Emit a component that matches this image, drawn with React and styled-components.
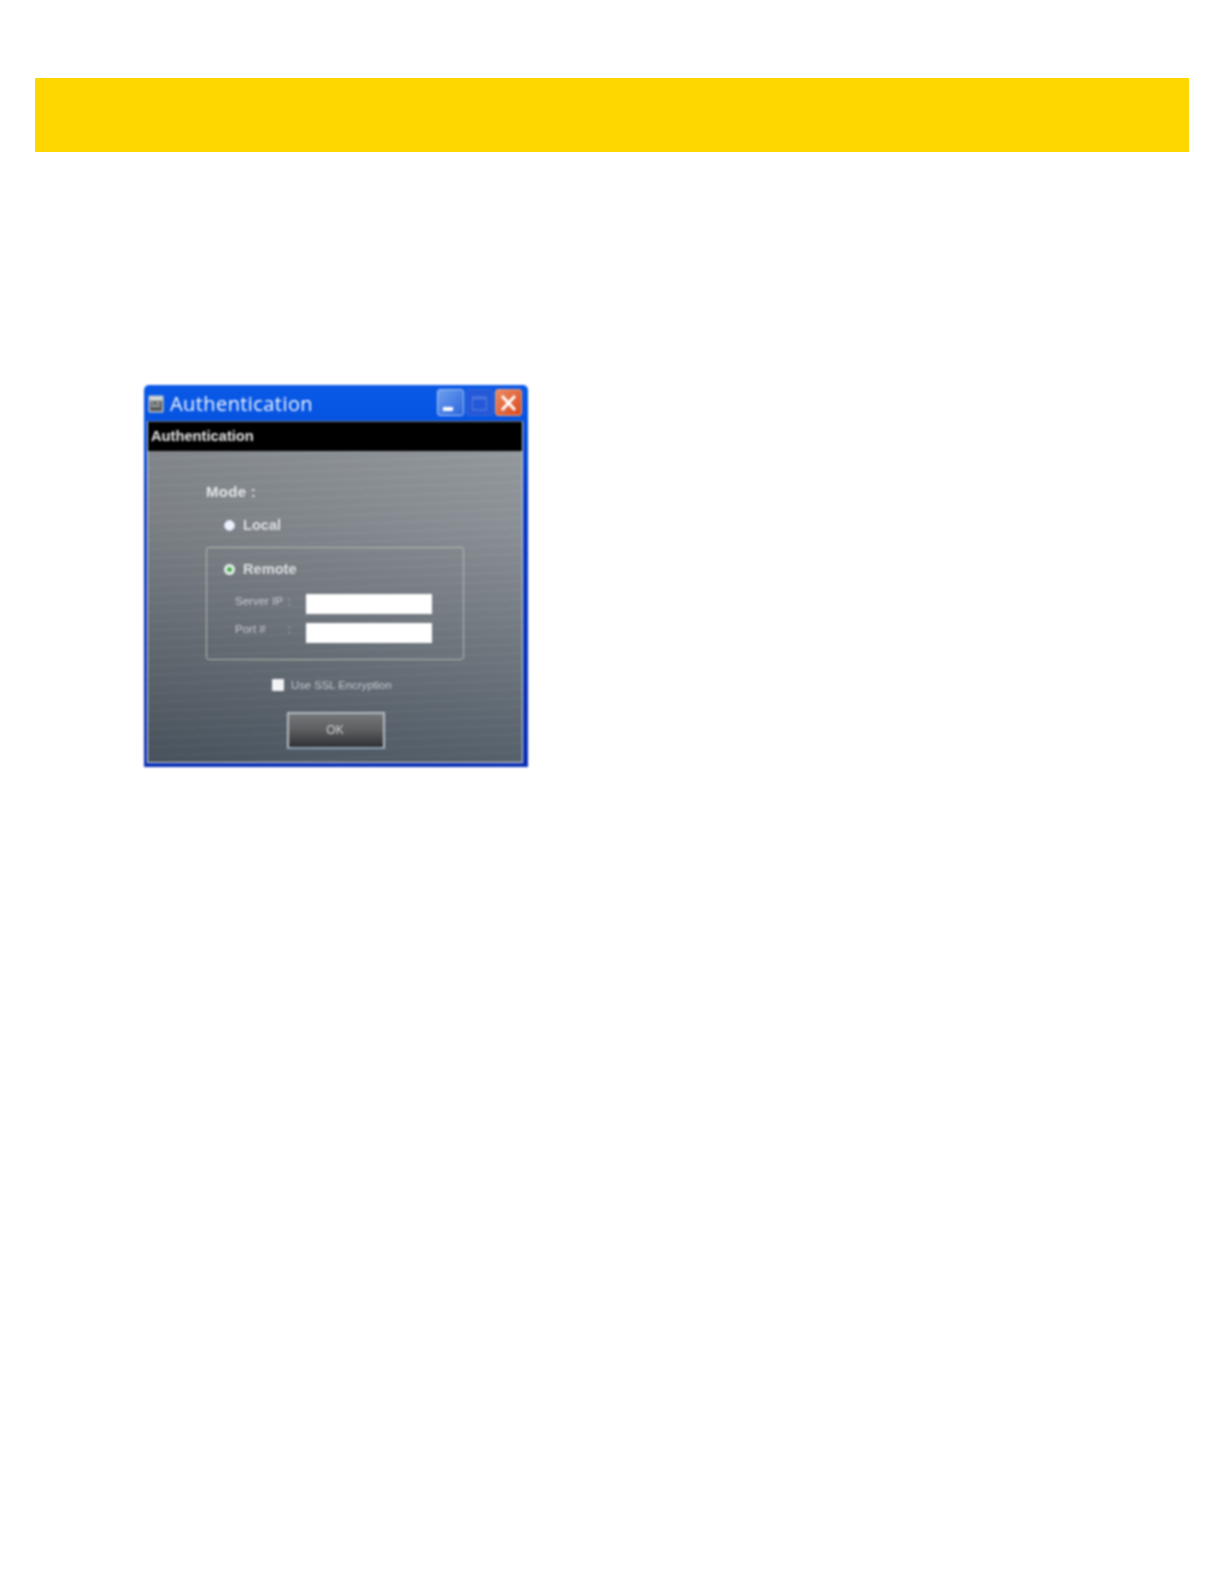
import React from 'react'
import { styled, createGlobalStyle } from 'styled-components'

const Global = createGlobalStyle`
   html, body {
      margin: 0;
      padding: 0;
      background: #fff;
      font-family: 'Liberation Sans', Arial, sans-serif;
   }
`

const Page = styled('div')`
   width: 1224px;
   height: 1584px;
   padding-top: 78px;
   box-sizing: border-box;
`
const Banner = styled('div')`
   width: 1154px;
   height: 74px;
   margin-left: 35px;
   background: #ffd700;
`
const Content = styled('div')`
   padding: 233px 0 0 144px;
`
const Window = styled('div')`
   width: 384px;
   height: 382px;
   box-sizing: border-box;
   display: flex;
   flex-direction: column;
   padding: 0 5px 4px 3px;
   background: linear-gradient(180deg, #0a5ae6 0%, #0653e2 10%, #0a3cc4 30%, #0c30b4 100%);
   border-radius: 5px 5px 0 0;
   filter: blur(0.9px);
`
const TitleBar = styled('div')`
   height: 36px;
   flex: none;
   display: flex;
   align-items: center;
   padding: 2px 0 0 1px;
   box-sizing: border-box;
`
const TitleIcon = styled('svg')`
   width: 16px;
   height: 18px;
   flex: none;
`
const TitleText = styled('span')`
   margin-left: 6px;
   color: #f4f8fe;
   font-family: 'Open Sans', sans-serif;
   font-size: 20px;
   font-weight: 500;
   line-height: 1;
   letter-spacing: 0.42px;
   flex: 1;
`
const WinButtons = styled('div')`
   display: flex;
   gap: 2px;
   margin: -3px 1px 0 0;
`
const WinButton = styled('div')`
   width: 27px;
   height: 27px;
   box-sizing: border-box;
   border-radius: 3px;
   border: 1px solid ${p => (p.$close ? '#e8a38c' : p.$dim ? '#3a68d8' : '#a9c6f2')};
   background: ${p =>
      p.$close
         ? 'linear-gradient(135deg, #ec8a63, #d8481c)'
         : p.$dim
            ? '#2458d8'
            : 'linear-gradient(135deg, #6f9ff0, #2a66dc)'};
   display: flex;
   align-items: center;
   justify-content: center;
   svg {
      display: block;
   }
`
const Client = styled('div')`
   flex: 1;
   display: flex;
   flex-direction: column;
   border: 1px solid #d8dde0;
   border-top-color: #6f7478;
   border-right-color: #cfd4d8;
   background:
      repeating-linear-gradient(178deg, rgba(255, 255, 255, 0.02) 0 2px, rgba(0, 0, 0, 0.02) 2px 9px),
      linear-gradient(100deg, rgba(0, 0, 0, 0.1) 0%, rgba(255, 255, 255, 0.05) 100%),
      linear-gradient(180deg, #969ba0 0%, #898f95 30%, #6e767e 62%, #4f5a65 100%);
`
const Header = styled('div')`
   height: 29px;
   flex: none;
   background: #000;
   color: #e6e6e6;
   font-size: 14.7px;
   font-weight: bold;
   line-height: 29px;
   padding-left: 3px;
`
const Form = styled('div')`
   flex: 1;
   display: flex;
   flex-direction: column;
   padding: 32px 0 0 58px;
`
const ModeLabel = styled('div')`
   color: #e4e6e8;
   font-size: 15px;
   font-weight: bold;
   line-height: 17px;
   letter-spacing: 0.3px;
`
const RadioRow = styled('div')`
   display: flex;
   align-items: center;
   gap: 8px;
   height: 16px;
   margin: ${p => p.$margin};
`
const Radio = styled('span')`
   width: 11px;
   height: 11px;
   border-radius: 50%;
   flex: none;
   box-sizing: border-box;
   background: ${p => (p.$on ? '#3fae4e' : '#eef2fa')};
   border: ${p => (p.$on ? '3px solid #e8f0ea' : '1px solid #cdd6ea')};
`
const RadioLabel = styled('span')`
   color: #dcdfe1;
   font-size: 14.6px;
   font-weight: bold;
   line-height: 16px;
`
const RemoteBox = styled('div')`
   width: 258px;
   height: 113px;
   box-sizing: border-box;
   margin-top: 14px;
   border: 1px solid #b4bab0;
   border-radius: 3px;
   padding-top: 13px;
`
const FieldRow = styled('div')`
   display: flex;
   align-items: center;
   height: 20px;
   margin: ${p => p.$margin};
   padding-left: 28px;
`
const FieldLabel = styled('span')`
   width: 71px;
   flex: none;
   display: flex;
   justify-content: space-between;
   padding-right: 15px;
   box-sizing: border-box;
   color: #c8ccd0;
   font-size: 11.5px;
   line-height: 14px;
   margin-top: ${p => p.$lift};
`
const FieldInput = styled('div')`
   width: 126px;
   height: 20px;
   background: #fff;
`
const SslRow = styled('div')`
   display: flex;
   align-items: center;
   gap: 7px;
   margin: 17px 0 0 66px;
   height: 16px;
`
const Check = styled('span')`
   width: 12px;
   height: 12px;
   flex: none;
   background: #f2f3f5;
   border-radius: 1px;
`
const SslLabel = styled('span')`
   color: #c4c9cd;
   font-size: 11.3px;
   line-height: 16px;
`
const OkButton = styled('button')`
   width: 98px;
   height: 37px;
   margin: 19px 0 0 81px;
   padding: 0 2px 2px 0;
   box-sizing: border-box;
   border: 2px solid #b4bbc1;
   border-bottom-color: #8fa2b4;
   background: linear-gradient(180deg, #75777a 0%, #5c5d5f 50%, #2e3034 100%);
   color: #d2d4d6;
   font-family: 'Liberation Sans', Arial, sans-serif;
   font-size: 12px;
`

export default function App() {
   return (
      <Page>
         <Global />
         <Banner />
         <Content>
            <Window>
               <TitleBar>
                  <TitleIcon viewBox="0 0 16 18">
                     <rect x="0.5" y="0.5" width="15" height="17" rx="1" fill="#c4c8c6" />
                     <rect x="2" y="6" width="12" height="10" fill="#55585a" />
                     <path d="M2 3h12M3 8h3M8 8h4M3 11h9" stroke="#e8ecea" strokeWidth="1.2" />
                  </TitleIcon>
                  <TitleText>Authentication</TitleText>
                  <WinButtons>
                     <WinButton>
                        <svg width="25" height="25" viewBox="0 0 25 25">
                           <rect x="5" y="17" width="10" height="4" fill="#fff" />
                        </svg>
                     </WinButton>
                     <WinButton $dim>
                        <svg width="25" height="25" viewBox="0 0 25 25">
                           <rect x="5.5" y="7" width="14" height="13" fill="none" stroke="#4a76dc" strokeWidth="1.5" />
                           <path d="M6 8.5h13" stroke="#4a76dc" strokeWidth="2" />
                        </svg>
                     </WinButton>
                     <WinButton $close>
                        <svg width="25" height="25" viewBox="0 0 25 25">
                           <path d="M6 6l13 14M19 6L6 20" stroke="#fff" strokeWidth="3" />
                        </svg>
                     </WinButton>
                  </WinButtons>
               </TitleBar>
               <Client>
                  <Header>Authentication</Header>
                  <Form>
                     <ModeLabel>Mode :</ModeLabel>
                     <RadioRow $margin="17px 0 0 18px">
                        <Radio />
                        <RadioLabel>Local</RadioLabel>
                     </RadioRow>
                     <RemoteBox>
                        <RadioRow $margin="0 0 0 17px">
                           <Radio $on />
                           <RadioLabel>Remote</RadioLabel>
                        </RadioRow>
                        <FieldRow $margin="17px 0 0">
                           <FieldLabel $lift="-7px">
                              <span>Server IP</span>
                              <span>:</span>
                           </FieldLabel>
                           <FieldInput />
                        </FieldRow>
                        <FieldRow $margin="9px 0 0">
                           <FieldLabel $lift="-9px">
                              <span>Port #</span>
                              <span>:</span>
                           </FieldLabel>
                           <FieldInput />
                        </FieldRow>
                     </RemoteBox>
                     <SslRow>
                        <Check />
                        <SslLabel>Use SSL Encryption</SslLabel>
                     </SslRow>
                     <OkButton type="button">OK</OkButton>
                  </Form>
               </Client>
            </Window>
         </Content>
      </Page>
   )
}
